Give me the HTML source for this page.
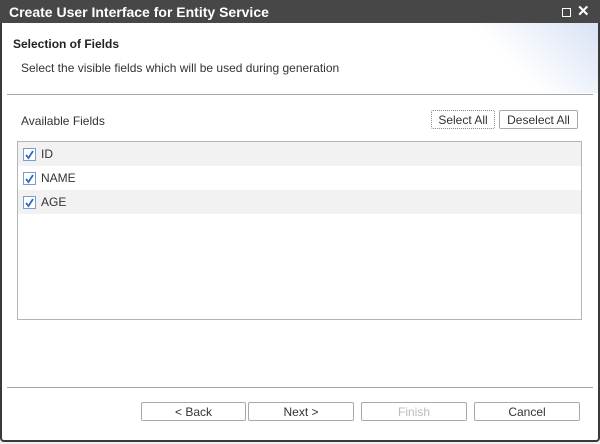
<!DOCTYPE html><html><head><style>
body{margin:0;width:600px;height:444px;background:#f0f0f0;font-family:"Liberation Sans",sans-serif;font-size:12px;color:#333;position:relative;overflow:hidden}
.win{position:absolute;left:0;top:0;width:596px;height:440px;background:#fff;border:2px solid #3a3a3a;border-top:0;border-radius:0 0 4px 4px}
.title{position:absolute;left:0;top:0;width:600px;height:23px;background:#474747;color:#fff;font-weight:bold;font-size:14px;line-height:24px}
.title span{position:absolute;left:9px}
.hdr{position:absolute;left:2px;top:23px;width:596px;height:70px;background:linear-gradient(225deg,#d8e2f4 0,#eef2fb 50px,#fff 90px)}
.a{position:absolute}
.sep{position:absolute;left:7px;width:586px;height:1px;background:#a8a8a8}
.btn{position:absolute;height:19px;border:1px solid #a9a9a9;border-radius:2px;background:#fff;text-align:center;line-height:19px;box-sizing:border-box;color:#333}
.list{position:absolute;left:17px;top:141px;width:565px;height:179px;border:1px solid #b5b5b5;box-sizing:border-box}
.row{height:24px;line-height:24px;position:relative}
.row.g{background:#f2f2f2}
.cb{position:absolute;left:5px;top:6px;width:11px;height:11px;border:1px solid #7a9dd0;background:#fff}
.row span{position:absolute;left:23px}
</style></head><body>
<div class="win"></div>
<div class="hdr"></div>
<div class="title"><span>Create User Interface for Entity Service</span>
<div class="a" style="left:562px;top:8px;width:7px;height:7px;border:1.5px solid #fff"></div>
<div class="a" style="left:577px;top:0;font-size:15px">✕</div></div>
<div class="a" style="left:13px;top:37px;font-weight:bold;font-size:12px;color:#222">Selection of Fields</div>
<div class="a" style="left:21px;top:61px">Select the visible fields which will be used during generation</div>
<div class="sep" style="top:94px"></div>
<div class="a" style="left:21px;top:114px">Available Fields</div>
<div class="btn" style="left:431px;top:110px;width:64px;border-style:dotted;border-color:#888">Select All</div>
<div class="btn" style="left:499px;top:110px;width:79px">Deselect All</div>
<div class="list">
<div class="row g"><div class="cb"><svg width="11" height="11" style="position:absolute;left:0;top:0"><path d="M2 6l2.5 3L9 2" stroke="#2f6bc4" stroke-width="1.8" fill="none"/></svg></div><span>ID</span></div>
<div class="row"><div class="cb"><svg width="11" height="11" style="position:absolute;left:0;top:0"><path d="M2 6l2.5 3L9 2" stroke="#2f6bc4" stroke-width="1.8" fill="none"/></svg></div><span>NAME</span></div>
<div class="row g"><div class="cb"><svg width="11" height="11" style="position:absolute;left:0;top:0"><path d="M2 6l2.5 3L9 2" stroke="#2f6bc4" stroke-width="1.8" fill="none"/></svg></div><span>AGE</span></div>
</div>
<div class="sep" style="top:387px"></div>
<div class="btn" style="left:141px;top:402px;width:105px">&lt; Back</div>
<div class="btn" style="left:248px;top:402px;width:106px">Next &gt;</div>
<div class="btn" style="left:361px;top:402px;width:106px;color:#bbb">Finish</div>
<div class="btn" style="left:474px;top:402px;width:106px">Cancel</div>
</body></html>
